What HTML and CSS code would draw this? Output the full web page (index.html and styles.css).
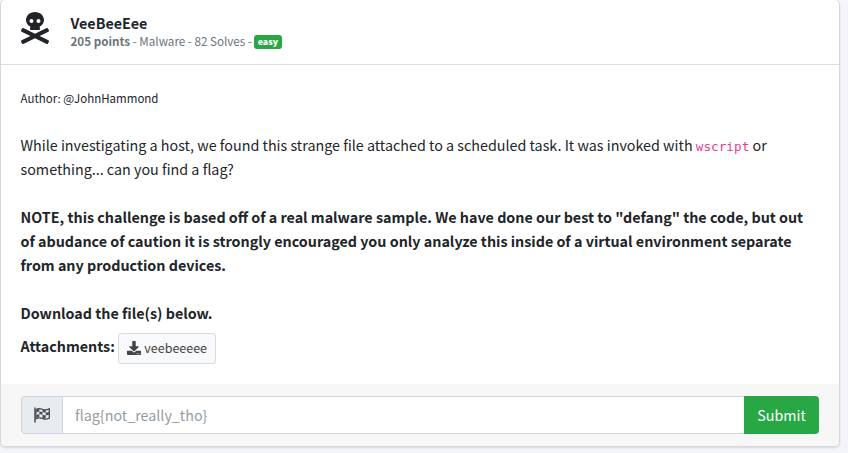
FILE: index.html
```html
<!DOCTYPE html>
<html lang="en">
<head>
<meta charset="utf-8">
<title>VeeBeeEee</title>
<link rel="stylesheet" href="styles.css">
</head>
<body>
<main class="card">
  <header class="card-header">
    <svg class="skull" viewBox="0 0 448 512"><path d="M439.15 453.06L297.17 384l141.99-69.06c7.9-3.95 11.11-13.56 7.15-21.46L432 264.85c-3.95-7.9-13.56-11.11-21.47-7.16L224 348.41 37.47 257.69c-7.9-3.95-17.51-.75-21.47 7.16L1.69 293.48c-3.95 7.9-.75 17.51 7.15 21.46L150.83 384 8.85 453.06c-7.9 3.95-11.11 13.56-7.15 21.47l14.31 28.63c3.95 7.9 13.56 11.11 21.47 7.15L224 419.59l186.53 90.72c7.9 3.95 17.51.75 21.47-7.15l14.31-28.63c3.95-7.91.74-17.52-7.16-21.47zM150 237.28l-5.48 25.87c-2.67 12.62 5.42 24.85 16.45 24.85h126.08c11.03 0 19.12-12.23 16.45-24.85l-5.5-25.87c41.78-22.41 70-62.75 70-109.28C368 57.31 303.53 0 224 0S80 57.31 80 128c0 46.53 28.21 86.87 70 109.28zM280 112c17.65 0 32 14.35 32 32s-14.35 32-32 32-32-14.35-32-32 14.35-32 32-32zm-112 0c17.65 0 32 14.35 32 32s-14.35 32-32 32-32-14.35-32-32 14.35-32 32-32z"/></svg>
    <div class="heading">
      <h1 class="title">VeeBeeEee</h1>
      <div class="meta"><span><b>205 points</b> - Malware - 82 Solves -</span><span class="badge">easy</span></div>
    </div>
  </header>
  <section class="card-body">
    <p class="author">Author: @JohnHammond</p>
    <p class="text">While investigating a host, we found this strange file attached to a scheduled task. It was invoked with <code>wscript</code> or<br>something... can you find a flag?</p>
    <p class="text strong">NOTE, this challenge is based off of a real malware sample. We have done our best to "defang" the code, but out<br>of abudance of caution it is strongly encouraged you only analyze this inside of a virtual environment separate<br>from any production devices.</p>
    <p class="text strong download">Download the file(s) below.</p>
    <div class="attachments">
      <span class="text strong label">Attachments:</span>
      <a class="file"><svg class="file-icon" viewBox="0 0 512 512"><path d="M216 0h80c13.3 0 24 10.7 24 24v168h87.7c17.8 0 26.7 21.5 14.1 34.1L269.7 378.3c-7.5 7.5-19.8 7.5-27.3 0L90.1 226.1c-12.6-12.6-3.7-34.1 14.1-34.1H192V24c0-13.3 10.7-24 24-24zm296 376v112c0 13.3-10.7 24-24 24H24c-13.3 0-24-10.7-24-24V376c0-13.3 10.7-24 24-24h146.7l49 49c20.1 20.1 52.5 20.1 72.6 0l49-49H488c13.3 0 24 10.7 24 24zm-124 88c0-11-9-20-20-20s-20 9-20 20 9 20 20 20 20-9 20-20zm64 0c0-11-9-20-20-20s-20 9-20 20 9 20 20 20 20-9 20-20z"/></svg><span class="file-name">veebeeeee</span></a>
    </div>
  </section>
  <footer class="card-footer">
    <span class="addon"><svg class="flag" viewBox="0 0 16 16"><path class="pole" d="M1 .5v15"/><path class="cloth" d="M2 2.600C5 .8 7 1.600 9 2.500s4 .5 6.300-.6v9.300c-2.300 1.200-4.300 1.300-6.300.5s-4-1.500-7 0z"/><path class="checks" d="M2.500 2.600 5.300 1.800v2.700l-2.800.7zM5.300 4.500l3.200.6v2.700l-3.200-.7zM8.500 2.300l3.200.6v2.800l-3.200-.6zM11.700 5.700l3.200-.8v2.800l-3.200.8zM2.500 7.900l2.800-.8v2.900l-2.800.7zM8.500 7.800l3.200.7v2.900l-3.200-.5z"/></svg></span>
    <div class="input">flag{not_really_tho}</div>
    <button class="submit">Submit</button>
  </footer>
</main>
</body>
</html>
```
FILE: styles.css
```css
* { box-sizing: border-box; }
body {
  margin: 0;
  height: 453px;
  overflow: hidden;
  background: #f4f5fb;
  color: #212529;
  font-family: "Noto Sans CJK SC", "Noto Sans", sans-serif;
}
h1, p { margin: 0; }
.card {
  display: flex;
  flex-direction: column;
  width: 840px;
  height: 447px;
  overflow: hidden;
  background: #fff;
  border: 1px solid #d6d7da;
  border-top: 0;
  border-radius: 5px;
  box-shadow: 0 1px 2px rgba(0, 0, 0, .12);
}
.card-header {
  display: flex;
  height: 65px;
  padding: 12px 20px 0 19.5px;
  border-bottom: 1px solid #dfdfdf;
}
.skull { width: 28px; height: 32px; fill: #212529; }
.heading { margin-left: 22px; white-space: nowrap; }
.title { font-size: 14.3px; line-height: 22px; font-weight: 700; }
.meta {
  display: flex;
  align-items: center;
  gap: 2px;
  margin-top: -2px;
  color: #6c757d;
  font-size: 11.65px;
  line-height: 16px;
}
.badge {
  width: 28px;
  height: 14px;
  margin-top: 3px;
  border-radius: 3px;
  background: #28a745;
  color: #fff;
  font-size: 8.8px;
  line-height: 13px;
  font-weight: 900;
  text-align: center;
}
.card-body { height: 319px; padding: 21px 20px 0 19.5px; white-space: nowrap; }
.author { font-size: 11.5px; line-height: 24px; margin-bottom: 23px; }
.text { font-size: 14.32px; line-height: 24px; margin-bottom: 24px; }
.strong { font-weight: 700; }
code { color: #e83e8c; font: 12.7px/1 "DejaVu Sans Mono", monospace; }
.download { margin-bottom: 8px; }
.attachments { display: flex; gap: 3.5px; }
.label { margin: 1px 0 0; }
.file {
  display: flex;
  align-items: center;
  gap: 3px;
  width: 98px;
  height: 31px;
  padding: 0 0 1px 8px;
  border: 1px solid #d8dbdf;
  border-radius: 3px;
  background: #f8f9fa;
  color: #444;
  font-size: 12.5px;
}
.file-icon { width: 14px; height: 14px; fill: #444; }
.file-name { margin-top: -2px; }
.card-footer {
  display: flex;
  height: 62px;
  padding: 12px 20px;
  background: #f7f7f7;
}
.addon {
  display: flex;
  align-items: center;
  justify-content: center;
  width: 42px;
  height: 38px;
  border: 1px solid #ced4da;
  border-radius: 4px 0 0 4px;
  background: #e9ecef;
}
.flag { width: 16px; height: 16px; }
.pole { fill: none; stroke: #495057; stroke-width: 1.5; }
.cloth { fill: none; stroke: #495057; stroke-width: 1.3; }
.checks { fill: #495057; }
.input {
  flex: 1;
  height: 38px;
  padding-left: 12px;
  border: 1px solid #ced4da;
  border-width: 1px 0;
  background: #fff;
  color: #939ba2;
  font-size: 14.3px;
  line-height: 35px;
}
.submit {
  width: 75px;
  height: 38px;
  padding: 0;
  border: 0;
  border-radius: 0 4px 4px 0;
  background: #28a745;
  color: #fff;
  font: 14.3px/36px "Noto Sans CJK SC", sans-serif;
}
```
